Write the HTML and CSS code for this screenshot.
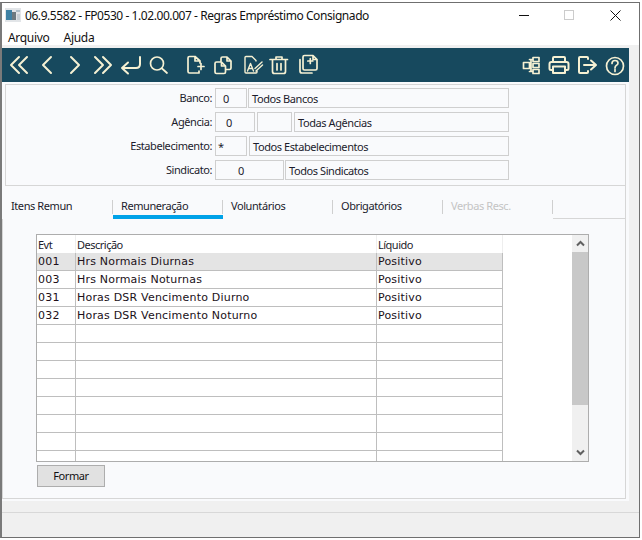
FILE: index.html
```html
<!DOCTYPE html>
<html lang="pt">
<head>
<meta charset="utf-8">
<title>Regras Empréstimo Consignado</title>
<link rel="stylesheet" href="styles.css">
</head>
<body>
<div class="window">
  <header class="titlebar">
    <svg class="app-icon" width="16" height="14" viewBox="0 0 16 14"><rect x="0" y="0" width="16" height="14" fill="#e2e5e8"/><rect x="1" y="2" width="6" height="10" fill="#3f82a5"/><rect x="7" y="4" width="4" height="8" fill="#6d7a80"/><rect x="11" y="2" width="4" height="2" fill="#aebfc9"/><rect x="12" y="6" width="3" height="6" fill="#c6cfd4"/></svg>
    <span class="title">06.9.5582 - FP0530 - 1.02.00.007 - Regras Empréstimo Consignado</span>
    <div class="win-controls">
      <svg width="46" height="24" viewBox="0 0 46 24"><path d="M18 12.500H28" stroke="#111" stroke-width="1" fill="none"/></svg>
      <svg width="46" height="24" viewBox="0 0 46 24"><rect x="17.500" y="7.500" width="9" height="9" stroke="#ccc" fill="none"/></svg>
      <svg width="46" height="24" viewBox="0 0 46 24"><path d="M17.500 7.500L27.500 17.500M27.500 7.500L17.500 17.500" stroke="#111" stroke-width="1" fill="none"/></svg>
    </div>
  </header>
  <nav class="menubar"><span>Arquivo</span><span>Ajuda</span></nav>
  <div class="toolbar">
    <svg class="tb" viewBox="0 0 28 34"><path d="M14 9L6 17L14 25M22 9L14 17L22 25"/></svg>
    <svg class="tb" viewBox="0 0 28 34"><path d="M18 9L10 17L18 25"/></svg>
    <svg class="tb" viewBox="0 0 28 34"><path d="M10 9L18 17L10 25"/></svg>
    <svg class="tb" viewBox="0 0 28 34"><path d="M6 9L14 17L6 25M14 9L22 17L14 25"/></svg>
    <svg class="tb" viewBox="0 0 28 34"><path d="M23 9V16Q23 20 19 20H5M11 14.500L5 20L11 25.500"/></svg>
    <svg class="tb thin" viewBox="0 0 28 34"><circle cx="12" cy="15.500" r="6.500"/><path d="M17 20.500L22 25"/></svg>
    <div class="tb-gap"></div>
    <svg class="tb thin" viewBox="0 0 28 34"><path d="M19 15V13L14 8.500H8.500Q7 8.500 7 10V23.500Q7 25 8.500 25H18V23M14 8.500V13H19M17 18.500H23M20 15.500V21.500"/></svg>
    <svg class="tb thin" viewBox="0 0 28 34"><path d="M12 13V10.500Q12 9 13.500 9H18L22 13V20Q22 21.500 20.500 21.500H17M18 9V13H22M6 15.500Q6 14 7.500 14H12.500L16.500 18V24Q16.500 25.500 15 25.500H7.500Q6 25.500 6 24ZM12.500 14V18H16.500"/></svg>
    <svg class="tb thin edit" viewBox="0 0 28 34"><path d="M19 13V12.500L15 8.500H9Q8 8.500 8 9.500V24Q8 25 9 25H19Q20 25 20 24V23M10.500 23L13.500 15.500L16.500 23M11.500 20.500H15.500M18 20.500L25 14M19 23L25.500 17"/></svg>
    <svg class="tb thin" viewBox="0 0 28 34"><path d="M5 11.500H22.500M11 11V9H17V11M7.500 12V23.500Q7.500 25.500 9.500 25.500H18.500Q20.500 25.500 20.500 23.500V12M12 15.500V22M16 15.500V22"/></svg>
    <div class="tb-gap-sm"></div>
    <svg class="tb thin" viewBox="0 0 28 34"><path d="M5 11.500V23Q5 25 7 25H17M8 9Q8 7.500 9.500 7.500H18L22 11.500V20.500Q22 22 20.500 22H9.500Q8 22 8 20.500ZM18 7.500V11.500H22M15.300 10.500V15.500M12.800 13H17.800"/></svg>
    <div class="tb-fill"></div>
    <svg class="tb thin" viewBox="0 0 28 34"><path d="M6.500 14.500H12.500V20.500H6.500ZM16 9.500H22V13.500H16ZM16 15.500H22V19.500H16ZM16 21.500H22V25.500H16ZM12.500 11.500H16M12.500 23.500H16M14 11.500V23.500"/></svg>
    <svg class="tb" viewBox="0 0 28 34"><path d="M8 14V10Q8 9 9 9H19Q20 9 20 10V14M8 22H6Q4.500 22 4.500 20.500V16Q4.500 14 6.500 14H21.500Q23.500 14 23.500 16V20.500Q23.500 22 22 22H20M8 18.500H20V25H8Z"/></svg>
    <svg class="tb" viewBox="0 0 28 34"><path d="M15 11V10Q15 9 14 9H7Q6 9 6 10V24Q6 25 7 25H14Q15 25 15 24V23M11 17H22M18 12.500L23 17L18 21.500"/></svg>
    <svg class="tb thin" viewBox="0 0 28 34"><circle cx="14" cy="18" r="8.500"/><path d="M11 15.500Q11 12.500 14 12.500Q17 12.500 17 15Q17 16.500 15.500 17.300Q14 18.200 14 20M14 21.500V23.500"/></svg>
  </div>
  <main class="content">
    <section class="group">
      <div class="row"><label class="lbl">Banco:</label><div class="fld w-32 p-8">0</div><div class="fld w-261">Todos Bancos</div></div>
      <div class="row"><label class="lbl">Agência:</label><div class="fld w-40 p-11">0</div><div class="fld w-35 ml"></div><div class="fld w-215 ml">Todas Agências</div></div>
      <div class="row"><label class="lbl">Estabelecimento:</label><div class="fld w-32 p-3">*</div><div class="fld w-260 ml">Todos Estabelecimentos</div></div>
      <div class="row"><label class="lbl">Sindicato:</label><div class="fld w-69 p-23">0</div><div class="fld w-224">Todos Sindicatos</div></div>
    </section>
    <div class="tabs">
      <div class="tab">Itens Remun</div>
      <div class="tab active">Remuneração</div>
      <div class="tab">Voluntários</div>
      <div class="tab">Obrigatórios</div>
      <div class="tab off">Verbas Resc.</div>
      <div class="tab-rest"></div>
    </div>
    <section class="panel">
      <div class="grid">
        <div class="grid-view">
          <table>
            <colgroup><col class="c1"><col class="c2"><col class="c3"></colgroup>
            <thead><tr><th>Evt</th><th>Descrição</th><th>Líquido</th></tr></thead>
            <tbody>
              <tr class="sel"><td>001</td><td>Hrs Normais Diurnas</td><td>Positivo</td></tr>
              <tr><td>003</td><td>Hrs Normais Noturnas</td><td>Positivo</td></tr>
              <tr><td>031</td><td>Horas DSR Vencimento Diurno</td><td>Positivo</td></tr>
              <tr><td>032</td><td>Horas DSR Vencimento Noturno</td><td>Positivo</td></tr>
              <tr><td></td><td></td><td></td></tr>
              <tr><td></td><td></td><td></td></tr>
              <tr><td></td><td></td><td></td></tr>
              <tr><td></td><td></td><td></td></tr>
              <tr><td></td><td></td><td></td></tr>
              <tr><td></td><td></td><td></td></tr>
              <tr><td></td><td></td><td></td></tr>
              <tr><td></td><td></td><td></td></tr>
            </tbody>
          </table>
        </div>
        <div class="scrollbar">
          <div class="sb-btn"><svg width="9" height="7" viewBox="0 0 9 7"><path d="M1 5.500L4.500 2L8 5.500" fill="none" stroke="#606060" stroke-width="2"/></svg></div>
          <div class="sb-thumb"></div>
          <div class="sb-track"><svg width="9" height="7" viewBox="0 0 9 7"><path d="M1 1.500L4.500 5L8 1.500" fill="none" stroke="#606060" stroke-width="2"/></svg></div>
        </div>
      </div>
      <button class="btn" type="button">Formar</button>
    </section>
  </main>
  <footer class="status"></footer>
</div>
</body>
</html>
```
FILE: styles.css
```css
* { box-sizing: border-box; }
html, body { margin: 0; padding: 0; background: #fff; }
body { padding-top: 2px; width: 642px; height: 540px; overflow: hidden; }
.window {
  width: 640px; height: 536px; background: #f0f0f0;
  border: 1px solid #6f6f6f; border-left-width: 2px; border-left-color: #7a7a7a;
  display: flex; flex-direction: column;
  font-family: "Noto Sans", sans-serif; font-size: 11px; letter-spacing: -0.42px; color: #1c1c2c;
}
.titlebar { height: 24px; background: #fff; display: flex; align-items: center; padding-left: 3px; flex: none; }
.app-icon { flex: none; margin-right: 4px; }
.title { font-size: 12px; letter-spacing: -0.43px; color: #111; white-space: nowrap; }
.win-controls { margin-left: auto; display: flex; }
.win-controls svg { display: block; }
.menubar { height: 18px; background: #fff; display: flex; gap: 14px; padding: 2px 0 0 6px; font-size: 12px; letter-spacing: -0.3px; line-height: 18px; color: #111; flex: none; }
.toolbar { margin-top: 3px; width: 627px; height: 34px; background: #17495e; display: flex; padding-left: 3px; flex: none; }
.tb { width: 28px; height: 34px; flex: none; display: block; }
.tb path, .tb circle { fill: none; stroke: #f6f1d3; stroke-width: 2; stroke-linecap: round; stroke-linejoin: round; }
.tb.thin path, .tb.thin circle { stroke-width: 1.700; }
.tb.edit path { stroke-width: 1.400; }
.tb-gap { width: 8px; flex: none; }
.tb-gap-sm { width: 2px; flex: none; }
.tb-fill { flex: 1; }
.content { width: 627px; height: 419px; background: #f9fafc; padding-top: 2px; flex: none; }
.group { margin: 0 3px; width: 621px; height: 102px; border: 1px solid #d6d6d6; padding-top: 3px; display: flex; flex-direction: column; gap: 4px; }
.row { display: flex; height: 20px; }
.lbl { width: 206px; margin-right: 3px; text-align: right; line-height: 19px; }
.fld { height: 20px; border: 1px solid #cfcfcf; padding-top: 1px; line-height: 18px; padding-left: 3px; margin-right: 1px; white-space: nowrap; }
.ml { margin-left: 1px; }
.w-32 { width: 32px; } .w-261 { width: 261px; } .w-40 { width: 40px; } .w-35 { width: 35px; }
.w-215 { width: 215px; } .w-260 { width: 260px; } .w-69 { width: 69px; } .w-224 { width: 224px; }
.p-8 { padding-left: 7px; } .p-11 { padding-left: 10px; } .p-3 { padding-left: 2px; } .p-23 { padding-left: 22px; }
.tabs { display: flex; margin: 0 0 0 1px; height: 34px; }
.tab { position: relative; width: 110px; height: 33px; padding: 11px 0 0 8px; line-height: 18px; flex: none; }
.tab::after { content: ""; position: absolute; right: 0; top: 14px; height: 14px; border-right: 1px solid #cfcfcf; }
.tab.active::before { content: ""; position: absolute; left: 0; right: 0; bottom: 0; height: 4px; background: #00a2e8; }
.tab.off { color: #c4c4c4; }
.tab-rest { width: 73px; height: 33px; border-bottom: 1px solid #d6d6d6; border-right: 1px solid #d6d6d6; flex: none; }
.panel { width: 624px; height: 280px; margin-top: -1px; border: 1px solid #d6d6d6; border-top: none; padding: 15px 0 0 33px; }
.grid { width: 553px; height: 228px; border: 1px solid #adadad; background: #fff; display: flex; }
.grid-view { width: 535px; overflow: hidden; flex: none; }
table { table-layout: fixed; width: 466px; border-collapse: separate; border-spacing: 0; font-family: "DejaVu Sans", sans-serif; font-size: 11px; letter-spacing: 0.2px; color: #201018; }
.c1 { width: 39px; } .c2 { width: 301px; } .c3 { width: 126px; }
th { height: 18px; padding: 0 0 0 1px; text-align: left; font-family: "Noto Sans", sans-serif; font-weight: normal; font-size: 11px; letter-spacing: -0.5px; color: #1c1c2c; border-right: 1px solid #eeeeee; }
td { height: 18px; padding: 0 0 0 1px; border-right: 1px solid #bebebe; border-bottom: 1px solid #bebebe; white-space: nowrap; }
.sel td { background: #e4e4e4; }
.scrollbar { width: 16px; flex: none; display: flex; flex-direction: column; background: #f0f0f0; margin-right: 1px; }
.sb-btn { height: 17px; display: flex; align-items: center; justify-content: center; }
.sb-thumb { height: 153px; background: #c8c8c8; }
.sb-track { flex: 1; display: flex; align-items: flex-end; justify-content: center; padding-bottom: 5px; }
.btn { display: block; margin: 3px 0 0 1px; width: 68px; height: 22px; padding: 0 0 2px; background: #e1e1e1; border: 1px solid #adadad; font-family: "Noto Sans", sans-serif; font-size: 11px; letter-spacing: -0.42px; color: #111; }
.status { flex: 1; margin-top: 11px; border-top: 1px solid #d8d8d8; }
```
